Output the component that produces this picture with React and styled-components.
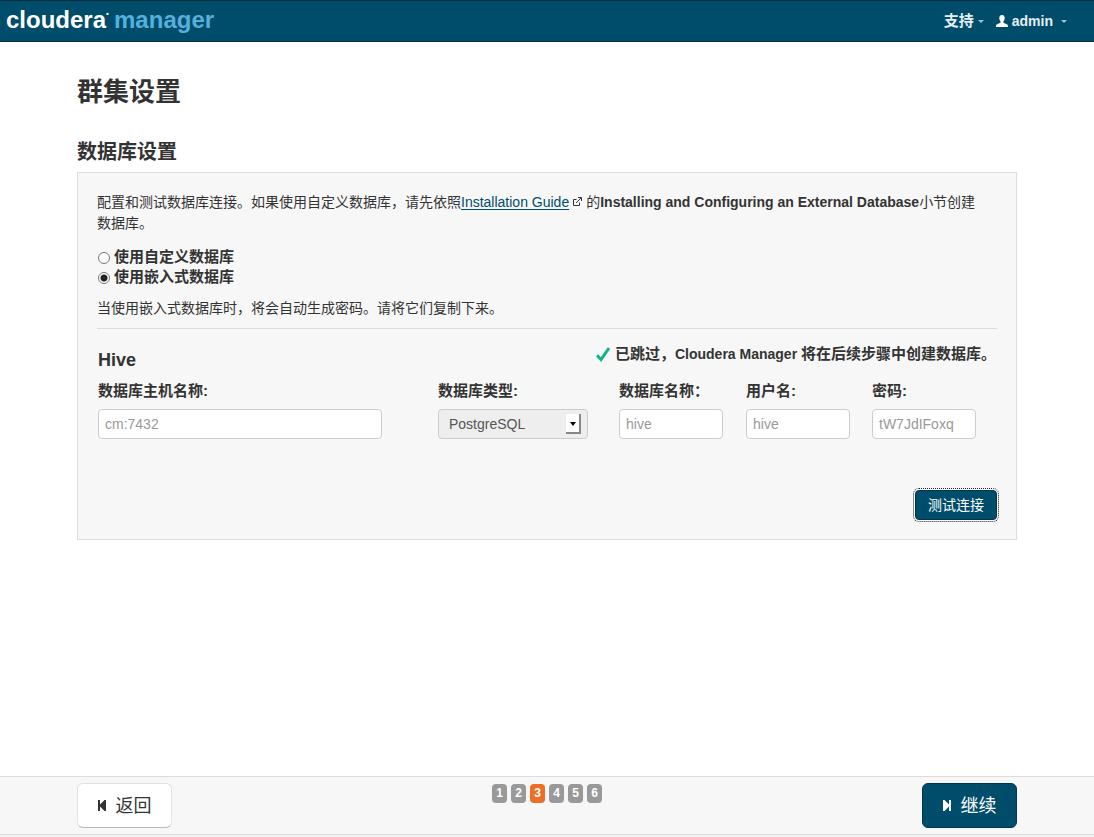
import React, { useState } from "react";
import styled, { createGlobalStyle } from "styled-components";

const colors = {
  brand: "#004d6b",
  brandDark: "#00364b",
  text: "#333",
  muted: "#999",
  panel: "#f7f7f7",
  border: "#dcdcdc",
  active: "#ec6f25",
  success: "#12b48b",
};

const steps = [1, 2, 3, 4, 5, 6];

const fields = [
  { id: "host", label: "数据库主机名称:", value: "cm:7432", width: 284 },
  { id: "type", label: "数据库类型:", options: ["PostgreSQL", "MySQL", "Oracle"] },
  { id: "dbname", label: "数据库名称：", value: "hive", width: 104 },
  { id: "user", label: "用户名:", value: "hive", width: 104 },
  { id: "password", label: "密码:", value: "tW7JdIFoxq", width: 104 },
];

const UserIcon = () => (
  <svg width="12" height="12" viewBox="0 0 12 12" fill="#fff" aria-hidden="true">
    <path d="M6 0C4.300 0 3.300 1.200 3.300 3c0 1.500.5 2.700 1.300 3.400v1C4.300 8.300 0 8.600 0 10.800V12h12v-1.200C12 8.600 7.700 8.300 7.400 7.400v-1C8.200 5.700 8.700 4.500 8.700 3 8.700 1.200 7.700 0 6 0z" />
  </svg>
);

const ExternalIcon = () => (
  <svg width="9" height="9" viewBox="0 0 9 9" fill="none" stroke="#333" aria-hidden="true">
    <path d="M3.500 2.500h-3v6h6v-3M3 6l5-5M5 .5h3.500V4" />
  </svg>
);

const CheckIcon = () => (
  <svg width="14" height="15" viewBox="0 0 14 15" fill="none" aria-hidden="true">
    <path d="M1 8.200l4 4.300L13 1" stroke={colors.success} strokeWidth="3" />
  </svg>
);

const StepIcon = ({ back }) => (
  <svg width="8" height="11" viewBox="0 0 8 11" fill="currentColor" aria-hidden="true">
    {back ? (
      <path d="M0 0h2v4.500L6.500 0H8v11H6.500L2 6.500V11H0z" />
    ) : (
      <path d="M8 0H6v4.500L1.500 0H0v11h1.500L6 6.500V11h2z" />
    )}
  </svg>
);

const Field = ({ id, label, value, width, options }) => (
  <FieldBox>
    <FieldLabel htmlFor={id}>{label}</FieldLabel>
    {options ? (
      <SelectBox>
        <Select id={id} disabled>
          {options.map((option) => (
            <option key={option}>{option}</option>
          ))}
        </Select>
      </SelectBox>
    ) : (
      <Input id={id} type="text" defaultValue={value} $width={width} readOnly />
    )}
  </FieldBox>
);

const App = () => {
  const [mode, setMode] = useState("embedded");

  return (
    <Page>
      <GlobalStyle />
      <Navbar>
        <Brand href="#">
          cloudera<Mark>•</Mark>
          <span>manager</span>
        </Brand>
        <Menu>
          <MenuButton $cjk>
            支持
            <Caret />
          </MenuButton>
          <MenuButton>
            <UserIcon />
            admin
            <Caret $spaced />
          </MenuButton>
        </Menu>
      </Navbar>

      <Content>
        <Title>群集设置</Title>
        <Subtitle>数据库设置</Subtitle>
        <Panel>
          <Text>
            配置和测试数据库连接。如果使用自定义数据库，请先依照
            <a href="#">Installation Guide</a>
            <LinkIcon>
              <ExternalIcon />
            </LinkIcon>
            的<b>Installing and Configuring an External Database</b>小节创建
            <wbr />
            数据库。
          </Text>
          <Options>
            <Option>
              <Radio
                name="mode"
                checked={mode === "custom"}
                onChange={() => setMode("custom")}
              />
              使用自定义数据库
            </Option>
            <Option>
              <Radio
                name="mode"
                checked={mode === "embedded"}
                onChange={() => setMode("embedded")}
              />
              使用嵌入式数据库
            </Option>
          </Options>
          <Text>当使用嵌入式数据库时，将会自动生成密码。请将它们复制下来。</Text>

          <Service>
            <ServiceHead>
              <h4>Hive</h4>
              <Status>
                <CheckIcon />
                <p>
                  已跳过，<span>Cloudera Manager </span>将在后续步骤中创建数据库。
                </p>
              </Status>
            </ServiceHead>
            <Fields>
              {fields.map((field) => (
                <Field key={field.id} {...field} />
              ))}
            </Fields>
          </Service>

          <Actions>
            <TestButton>测试连接</TestButton>
          </Actions>
        </Panel>
      </Content>

      <Footer>
        <FooterInner>
          <StepButton>
            <StepIcon back />
            返回
          </StepButton>
          <Pager>
            {steps.map((step) => (
              <Badge key={step} $active={step === 3}>
                {step}
              </Badge>
            ))}
          </Pager>
          <StepButton $primary>
            <StepIcon />
            继续
          </StepButton>
        </FooterInner>
      </Footer>
    </Page>
  );
};

export default App;

const GlobalStyle = createGlobalStyle`
  * {
    box-sizing: border-box;
    margin: 0;
    padding: 0;
  }
  body {
    background: #fff;
    color: ${colors.text};
    font-family: "Liberation Sans", "Noto Sans CJK SC", sans-serif;
    font-size: 14px;
    line-height: 20px;
  }
  button, input, select {
    font: inherit;
  }
  svg {
    flex-shrink: 0;
  }
`;

const Page = styled.div`
  display: flex;
  flex-direction: column;
  min-height: 100vh;
`;

const Navbar = styled.header`
  display: flex;
  justify-content: space-between;
  align-items: center;
  height: 42px;
  padding: 0 27px 0 6px;
  background: ${colors.brand};
  border-top: 1px solid #0a2c3a;
  border-bottom: 1px solid #0a2c3a;
`;

const Brand = styled.a`
  display: flex;
  padding-bottom: 2px;
  color: #fff;
  font-size: 24px;
  font-weight: bold;
  line-height: 36px;
  text-decoration: none;
  span:last-child {
    color: #55b0dc;
  }
`;

const Mark = styled.span`
  width: 8px;
  font-size: 8px;
  line-height: 24px;
`;

const Menu = styled.nav`
  display: flex;
  gap: 12px;
`;

const MenuButton = styled.button`
  display: flex;
  align-items: center;
  gap: 4px;
  background: none;
  border: 0;
  color: #e6eef1;
  font-size: ${(props) => (props.$cjk ? "15px" : "14px")};
  font-weight: bold;
`;

const Caret = styled.i`
  margin-left: ${(props) => (props.$spaced ? "4px" : "0")};
  border: 3px solid transparent;
  border-top-color: #a3c0cb;
  border-bottom: 0;
`;

const Content = styled.main`
  width: 100%;
  max-width: 940px;
  margin: 0 auto;
  padding: 30px 0;
`;

const Title = styled.h2`
  font-size: 26px;
  line-height: 40px;
`;

const Subtitle = styled.h3`
  margin-top: 20px;
  font-size: 20px;
  line-height: 40px;
`;

const Panel = styled.section`
  padding: 19px;
  background: ${colors.panel};
  border: 1px solid ${colors.border};
`;

const Text = styled.p`
  padding-right: 10px;
  line-height: 21px;
  a {
    color: ${colors.brand};
    text-underline-offset: 2px;
  }
`;

const LinkIcon = styled.span`
  padding: 0 4px;
  svg {
    vertical-align: 1px;
  }
`;

const Options = styled.div`
  margin: 13px 0 11px;
`;

const Option = styled.label`
  display: flex;
  align-items: center;
  gap: 4px;
  font-size: 15px;
  font-weight: bold;
`;

const Radio = styled.input.attrs({ type: "radio" })`
  appearance: none;
  width: 12px;
  height: 12px;
  margin: 2px 0 0 1px;
  background: #fff;
  border: 1px solid #777;
  border-radius: 50%;
  &:checked {
    background: radial-gradient(circle, #222 3px, #fff 4px);
  }
`;

const Service = styled.div`
  margin-top: 9px;
  padding: 15px 1px 0;
  border-top: 1px solid ${colors.border};
`;

const ServiceHead = styled.div`
  display: flex;
  justify-content: space-between;
  h4 {
    padding-top: 6px;
    font-size: 18px;
    line-height: 20px;
  }
`;

const Status = styled.div`
  display: flex;
  gap: 5px;
  height: 20px;
  align-items: center;
  font-size: 15px;
  font-weight: bold;
  span {
    font-size: 14px;
  }
`;

const Fields = styled.div`
  display: grid;
  grid-template-columns: 340fr 181fr 127fr 126fr 124fr;
  margin-top: 11px;
`;

const FieldBox = styled.div`
  display: flex;
  flex-direction: column;
`;

const FieldLabel = styled.label`
  margin-bottom: 8px;
  font-size: 15px;
  font-weight: bold;
`;

const Input = styled.input`
  width: ${(props) => props.$width}px;
  max-width: 100%;
  height: 30px;
  padding: 0 6px;
  background: #fff;
  border: 1px solid #ccc;
  border-radius: 4px;
  color: ${colors.muted};
`;

const SelectBox = styled.div`
  position: relative;
  width: 150px;
  &::before {
    content: "";
    position: absolute;
    top: 5px;
    right: 7px;
    width: 15px;
    height: 20px;
    box-sizing: border-box;
    background: #fff;
    border-right: 2px solid #888;
    border-bottom: 2px solid #888;
  }
  &::after {
    content: "";
    position: absolute;
    top: 13px;
    right: 12px;
    border: 3px solid transparent;
    border-top: 4px solid #000;
    border-bottom: 0;
  }
`;

const Select = styled.select`
  appearance: none;
  display: block;
  width: 100%;
  height: 30px;
  padding: 0 10px;
  background: #eee;
  border: 1px solid #ccc;
  border-radius: 4px;
  color: #555;
  opacity: 1;
`;

const Actions = styled.div`
  display: flex;
  justify-content: flex-end;
  margin-top: 51px;
`;

const TestButton = styled.button`
  height: 30px;
  padding: 0 12px;
  background: ${colors.brand};
  border: 1px solid ${colors.brandDark};
  border-radius: 4px;
  color: #fff;
  outline: 1px dotted #222;
  outline-offset: 1px;
`;

const Footer = styled.footer`
  margin-top: auto;
  padding: 6px 0;
  background: ${colors.panel};
  border-top: 1px solid ${colors.border};
  border-bottom: 1px solid ${colors.border};
  box-shadow: 0 2px 0 #f3f3f3;
  margin-bottom: 2px;
`;

const FooterInner = styled.div`
  display: flex;
  justify-content: space-between;
  max-width: 940px;
  margin: 0 auto;
`;

const StepButton = styled.button`
  display: flex;
  align-items: center;
  justify-content: center;
  gap: 10px;
  width: 95px;
  height: 45px;
  background: ${(props) => (props.$primary ? colors.brand : "#fff")};
  border: 1px solid ${(props) => (props.$primary ? colors.brandDark : "#e2e2e2")};
  border-bottom-color: ${(props) => (props.$primary ? colors.brandDark : "#bbb")};
  border-radius: 6px;
  color: ${(props) => (props.$primary ? "#fff" : colors.text)};
  font-size: 18px;
`;

const Pager = styled.div`
  display: flex;
  gap: 4px;
  padding-top: 1px;
`;

const Badge = styled.span`
  width: 15px;
  height: 19px;
  background: ${(props) => (props.$active ? colors.active : "#999")};
  border-radius: 4px;
  color: #fff;
  font-size: 12px;
  font-weight: bold;
  line-height: 19px;
  text-align: center;
`;
